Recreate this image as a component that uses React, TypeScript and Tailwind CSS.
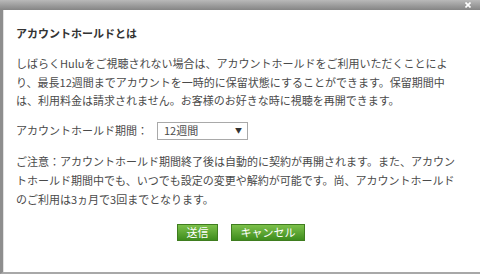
import React from 'react';

const font = { fontFamily: '"Noto Sans CJK JP", "Noto Sans", sans-serif' };

export default function App() {
  return (
    <div className="w-[480px] h-[274px] bg-white flex flex-col overflow-hidden text-[#4a4a4a]" style={font}>
      <div className="h-[10px] shrink-0 bg-gradient-to-b from-[#b9b9b9] to-[#858585] flex items-center justify-end pr-[9px]">
        <svg width="6" height="6" viewBox="0 0 6 6">
          <path d="M0.5 0.5 L5.5 5.5 M5.5 0.5 L0.5 5.5" stroke="#fff" strokeWidth="1.6" />
        </svg>
      </div>
      <div className="flex-1 flex border-l-[3px] border-[#8e8e8e] border-b-2 border-b-[#a8a8a8]">
        <div className="w-px bg-[#e2e2e2]" />
        <div className="flex-1 pl-[12px] pt-[15px]">
          <h2 className="text-[11px] leading-[16px] font-bold text-[#333]">アカウントホールドとは</h2>
          <p className="mt-[13px] text-[11px] leading-[18.5px] whitespace-nowrap">
            しばらくHuluをご視聴されない場合は、アカウントホールドをご利用いただくことによ
            <br />
            り、最長12週間までアカウントを一時的に保留状態にすることができます。保留期間中
            <br />
            は、利用料金は請求されません。お客様のお好きな時に視聴を再開できます。
          </p>
          <div className="mt-[12px] flex items-center text-[11px]">
            <span>アカウントホールド期間：</span>
            <div className="ml-[9px] w-[91px] h-[18px] border border-[#a9a9a9] flex items-center justify-between pl-[6px] pr-[5px]">
              <span>12週間</span>
              <span className="text-[7px] text-[#333]">▼</span>
            </div>
          </div>
          <p className="mt-[12px] text-[11px] leading-[19px] whitespace-nowrap">
            ご注意：アカウントホールド期間終了後は自動的に契約が再開されます。また、アカウン
            <br />
            トホールド期間中でも、いつでも設定の変更や解約が可能です。尚、アカウントホールド
            <br />
            のご利用は3ヵ月で3回までとなります。
          </p>
          <div className="mt-[15px] flex justify-center gap-[13px] pr-[14px]">
            <button className="w-[41px] h-[17px] border border-[#3f7d1f] bg-gradient-to-b from-[#7cc14a] to-[#3e8d1c] text-white text-[11px] leading-none">
              送信
            </button>
            <button className="w-[74px] h-[17px] border border-[#3f7d1f] bg-gradient-to-b from-[#7cc14a] to-[#3e8d1c] text-white text-[11px] leading-none">
              キャンセル
            </button>
          </div>
        </div>
      </div>
    </div>
  );
}
